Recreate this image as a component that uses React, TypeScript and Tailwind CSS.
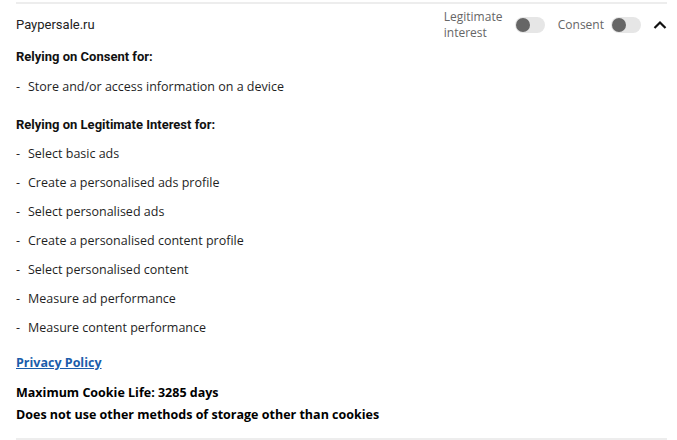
import React from 'react';

const consentPurposes = ['Store and/or access information on a device'];

const legitPurposes = [
  'Select basic ads',
  'Create a personalised ads profile',
  'Select personalised ads',
  'Create a personalised content profile',
  'Select personalised content',
  'Measure ad performance',
  'Measure content performance',
];

function Toggle() {
  return (
    <div className="w-[30px] h-[16px] rounded-full bg-[#e6e6e6] flex items-center">
      <div className="w-[14px] h-[14px] rounded-full bg-[#666666] ml-[1px]" />
    </div>
  );
}

function Item({ text }: { text: string }) {
  return (
    <li className="flex h-[29px] items-center text-[12.5px] text-[#1f1f1f]">
      <span className="w-[12px]">-</span>
      <span>{text}</span>
    </li>
  );
}

export default function App() {
  return (
    <div className="bg-white w-[677px] h-[440px] pt-[2px] pl-[16px] pr-[10px]" style={{ fontFamily: '"Open Sans", "Noto Sans", sans-serif' }}>
      <div className="border-t-2 border-b-2 border-[#ededed]">
        {/* header */}
        <div className="flex items-center h-[42px]">
          <div className="flex-1 text-[13px] text-[#222]" style={{ fontFamily: 'Roboto, sans-serif' }}>
            Paypersale.ru
          </div>
          <div className="text-[12px] leading-[16px] text-[#666] w-[71px]">
            Legitimate
            <br />
            interest
          </div>
          <Toggle />
          <div className="text-[12px] text-[#666] ml-[13px] mr-[7px]">Consent</div>
          <Toggle />
          <svg width="14" height="10" viewBox="0 0 14 10" className="ml-[12px]">
            <path d="M1.5 8 L7 2.5 L12.5 8" fill="none" stroke="#111" strokeWidth="2.2" />
          </svg>
        </div>

        <div className="text-[13px] font-bold text-[#111] mt-[1px]" style={{ fontFamily: 'Roboto, sans-serif' }}>
          Relying on Consent for:
        </div>
        <ul className="mt-[6px]">
          {consentPurposes.map((p) => (
            <Item key={p} text={p} />
          ))}
        </ul>

        <div className="text-[13px] font-bold text-[#111] mt-[13px] mb-[6px]" style={{ fontFamily: 'Roboto, sans-serif' }}>
          Relying on Legitimate Interest for:
        </div>
        <ul>
          {legitPurposes.map((p) => (
            <Item key={p} text={p} />
          ))}
        </ul>

        <div className="mt-[11px] text-[12.5px] font-bold text-[#1a5dab] underline">Privacy Policy</div>
        <div className="mt-[10px] text-[12.5px] font-bold text-black leading-[19px]">Maximum Cookie Life: 3285 days</div>
        <div className="mt-[3px] mb-[14px] text-[12.5px] font-bold text-black leading-[19px]">
          Does not use other methods of storage other than cookies
        </div>
      </div>
    </div>
  );
}
